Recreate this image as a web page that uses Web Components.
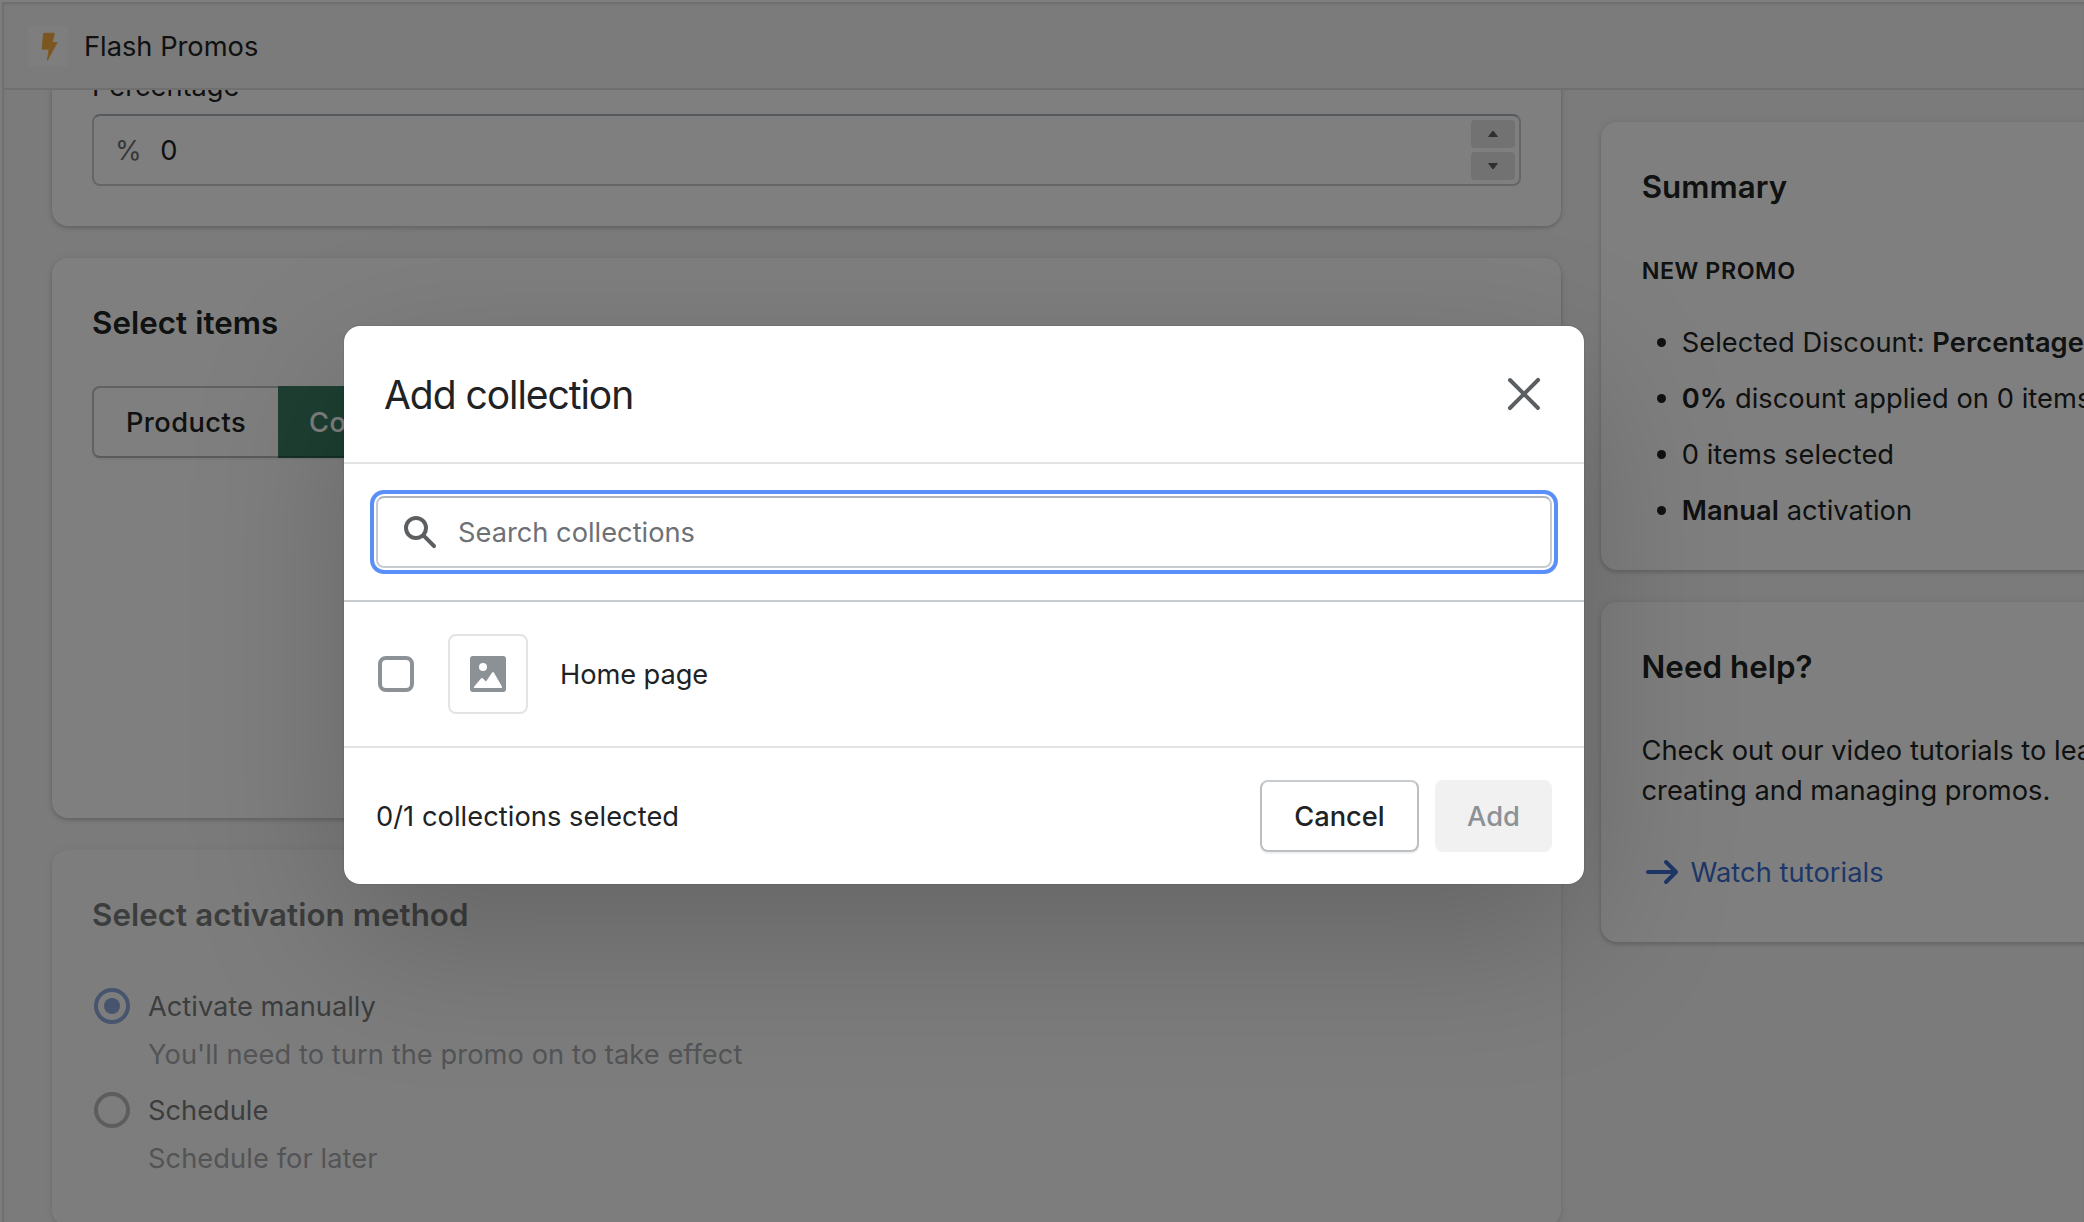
<!DOCTYPE html>
<html lang="en">
<head>
<meta charset="utf-8">
<title>Flash Promos</title>
<style>
html,body{margin:0;height:100%;overflow:hidden}
body{font:400 27.25px/40px Inter,"Liberation Sans",sans-serif;color:#202223;background:#f6f6f7}
.columns{display:flex;align-items:flex-start;gap:40px;padding-left:48px}
.main{display:flex;flex-direction:column;gap:32px;width:1509px;flex:none;margin-top:-40px}
.aside{display:flex;flex-direction:column;gap:32px;width:560px;flex:none;padding-top:32px}
.copy{white-space:nowrap;padding-top:1px;margin-bottom:-1px;letter-spacing:.02px}
b{font-weight:600}
</style>
</head>
<body>
<promo-app>
  <app-bar slot="bar">Flash Promos</app-bar>
  <div class="columns">
    <div class="main">
      <ui-card style="--pt:16px;height:176px"><number-field label="Percentage" prefix="%" value="0"></number-field></ui-card>
      <ui-card style="height:560px" heading="Select items"><segmented-control><span>Products</span><span slot="on">Collections</span></segmented-control></ui-card>
      <ui-card style="height:376px;opacity:.58;--gap:48px" heading="Select activation method">
        <radio-option checked label="Activate manually">You'll need to turn the promo on to take effect</radio-option>
        <radio-option label="Schedule">Schedule for later</radio-option>
      </ui-card>
    </div>
    <div class="aside">
      <ui-card style="height:448px;--gap:44px;--pl:40.7px" heading="Summary">
        <summary-list label="New promo">
          <summary-item>Selected Discount: <b>Percentage</b></summary-item>
          <summary-item><b>0%</b> discount applied on 0 items</summary-item>
          <summary-item>0 items selected</summary-item>
          <summary-item><b>Manual</b> activation</summary-item>
        </summary-list>
      </ui-card>
      <ui-card style="height:340px;--pl:40.5px" heading="Need help?">
        <div class="copy">Check out our video tutorials to learn<br>creating and managing promos.</div>
        <arrow-link>Watch tutorials</arrow-link>
      </ui-card>
    </div>
  </div>
  <modal-dialog slot="overlay" heading="Add collection">
    <search-field>Search collections</search-field>
    <resource-row slot="rows">Home page</resource-row>
    <span slot="status">0/1 collections selected</span>
    <ui-button slot="actions" style="width:159px">Cancel</ui-button>
    <ui-button slot="actions" disabled style="width:117px">Add</ui-button>
  </modal-dialog>
</promo-app>
<script>
const define = (name, render) => customElements.define(name, class extends HTMLElement {
  connectedCallback() {
    if (this.shadowRoot) return;
    const t = document.createElement('template');
    // .t drops a label one pixel inside its line box without growing the row
    t.innerHTML = '<style>*{box-sizing:border-box}:host{box-sizing:border-box}.t{padding-top:1px;margin-bottom:-1px}</style>' + render(n => this.getAttribute(n) || '');
    this.attachShadow({ mode: 'open' }).append(t.content.cloneNode(true));
  }
});

define('promo-app', () => `
<style>
:host{display:grid;grid-template:2px 1220px/4px 1fr;width:100vw;height:100vh;overflow:hidden;position:relative}
.top{grid-column:1/3;background:#fff}
.rail{background:#fafafa;border-right:2px solid #e0e0e1}
.view{display:flex;flex-direction:column;overflow:hidden;box-shadow:inset 0 3px 3px -1px #d9d9da}
.scroll{flex:1;overflow:hidden}
</style>
<div class="top"></div><div class="rail"></div>
<div class="view"><slot name="bar"></slot><div class="scroll"><slot></slot></div></div>
<slot name="overlay"></slot>`);

define('app-bar', () => `
<style>
:host{display:flex;align-items:center;gap:16px;height:88px;flex:none;padding:2px 0 0 24px;border-bottom:2px solid #dedfe0}
.logo{width:40px;height:40px;background:#fdfdfd;border-radius:3px}
svg{display:block}
</style>
<div class="logo"><svg width="40" height="40" viewBox="0 0 40 40"><path d="M15.500 7.200h11l-2.200 9.300h4.900L19.400 34.400l1.600-11.200h-6.900z" fill="#f9ad42" stroke="#f9ad42" stroke-width=".8" stroke-linejoin="round"/></svg></div>
<span class="t"><slot></slot></span>`);

define('ui-card', a => `
<style>
:host{display:block;flex:none;background:#fff;border-radius:16px;padding:var(--pt,40px) 40px 0 var(--pl,40px);box-shadow:0 0 10px rgba(23,24,24,.06),0 2px 4px rgba(0,0,0,.18)}
h2{margin:0 0 calc(var(--gap,40px) - 1px);padding-top:1px;font-size:31.3px;font-weight:600;line-height:48px;letter-spacing:.06px}
</style>
${a('heading') ? `<h2>${a('heading')}</h2>` : ''}<slot></slot>`);

define('number-field', a => `
<style>
:host{display:block}
.box{display:flex;align-items:center;height:72px;margin-top:8px;border:2px solid #c9cccf;border-top-color:#aeb4b9;border-radius:8px;padding:0 4px 0 21px}
.pre{color:#6d7175;margin-right:18.500px}
.val{flex:1}
.spin{display:flex;flex-direction:column;gap:4px;width:44px}
.spin i{display:flex;align-items:center;justify-content:center;height:28px;border-radius:4px;background:#e4e5e7}
svg{display:block;fill:#5c5f62}
</style>
<div class="t">${a('label')}</div>
<div class="box"><span class="pre t">${a('prefix')}</span><span class="val t">${a('value')}</span>
<span class="spin"><i><svg width="12" height="8" viewBox="0 0 12 8"><path d="M6 1 1.600 6.500h8.800z" stroke="#5c5f62" stroke-linejoin="round"/></svg></i><i><svg width="12" height="8" viewBox="0 0 12 8"><path d="M6 7 1.600 1.500h8.800z" stroke="#5c5f62" stroke-linejoin="round"/></svg></i></span></div>`);

define('segmented-control', () => `
<style>
:host{display:flex;height:72px;font-weight:500;letter-spacing:.45px}
.a{width:186px;display:flex;align-items:center;justify-content:center;border:2px solid #c0c2c4;border-bottom-color:#b4b6b8;border-right:0;border-radius:8px 0 0 8px;box-shadow:0 2px 0 rgba(0,0,0,.05)}
.b{display:flex;align-items:center;padding:0 31px;color:#fff;background:#3a7e62;border-radius:0 8px 8px 0;box-shadow:inset 0 -2px 0 rgba(0,0,0,.22),0 2px 0 rgba(0,0,0,.05)}
</style>
<div class="a"><span class="t"><slot></slot></span></div><div class="b"><span class="t"><slot name="on"></slot></span></div>`);

define('radio-option', a => `
<style>
:host{display:grid;grid-template-columns:36px 1fr;grid-auto-rows:40px;column-gap:18px;row-gap:8px;padding-left:2px;margin-bottom:16px;align-items:center}
i{width:36px;height:36px;border-radius:50%;border:4px solid #8c9196;display:grid;place-items:center}
:host([checked]) i{border-color:#4070cc}
:host([checked]) i::after{content:"";width:16px;height:16px;border-radius:50%;background:#4070cc}
p{grid-column:2;margin:0;color:#6d7175;letter-spacing:.07px}
p.t{margin-bottom:-1px}
</style>
<i></i><span class="t">${a('label')}</span><p class="t"><slot></slot></p>`);

define('summary-list', a => `
<style>
:host{display:block}
h3{margin:0 0 35px;padding-top:1px;font-size:23.3px;line-height:32px;font-weight:600;letter-spacing:.55px;text-transform:uppercase}
div{display:flex;flex-direction:column;gap:16px}
</style><h3>${a('label')}</h3><div><slot></slot></div>`);

define('summary-item', () => `
<style>
:host{display:flex;align-items:center;white-space:nowrap;letter-spacing:.06px}
i{width:9px;height:9px;border-radius:50%;background:currentColor;margin:0 16px 0 15px}
</style><i></i><span class="t"><slot></slot></span>`);

define('arrow-link', () => `
<style>
:host{display:flex;align-items:center;gap:9px;margin-top:42px;color:#3b6fd0}
svg{display:block;fill:currentColor}
span{letter-spacing:.05px}
</style>
<svg width="40" height="40" viewBox="0 0 20 20"><path d="M17.707 9.293l-5-5a.999.999 0 1 0-1.414 1.414L14.586 9H3a1 1 0 1 0 0 2h11.586l-3.293 3.293a.999.999 0 1 0 1.414 1.414l5-5a.999.999 0 0 0 0-1.414z"/></svg><span class="t"><slot></slot></span>`);

define('modal-dialog', a => `
<style>
:host{position:absolute;inset:0;background:rgba(0,0,0,.5);display:flex;align-items:flex-start;padding:326px 0 0 344px}
.dlg{width:1240px;background:#fff;border-radius:16px;box-shadow:0 52px 160px rgba(0,0,0,.2),0 0 2px rgba(0,0,0,.2)}
header{display:flex;align-items:center;justify-content:space-between;height:138px;padding:0 40px;border-bottom:2px solid #e1e3e5}
h1{margin:0;padding-top:2px;font-size:39px;font-weight:400;line-height:56px;letter-spacing:-1.050px}
svg{display:block;fill:#5c5f62}
.search{height:138px;padding:26px;border-bottom:2px solid #c9cccf}
.rows{border-bottom:2px solid #e1e3e5}
footer{display:flex;align-items:center;gap:16px;height:136px;padding:0 32px}
.status{flex:1;letter-spacing:.05px}
</style>
<div class="dlg">
<header><h1>${a('heading')}</h1><svg width="40" height="40" viewBox="0 0 20 20"><path d="M11.414 10l6.293-6.293a1 1 0 1 0-1.414-1.414L10 8.586 3.707 2.293a1 1 0 0 0-1.414 1.414L8.586 10l-6.293 6.293a1 1 0 1 0 1.414 1.414L10 11.414l6.293 6.293A.998.998 0 0 0 18 17a.999.999 0 0 0-.293-.707L11.414 10z"/></svg></header>
<div class="search"><slot></slot></div>
<div class="rows"><slot name="rows"></slot></div>
<footer><div class="status t"><slot name="status"></slot></div><slot name="actions"></slot></footer>
</div>`);

define('search-field', () => `
<style>
:host{display:block;border:4px solid #5a8ff8;border-radius:14px;padding:2px;height:84px}
div{display:flex;align-items:center;gap:18px;height:72px;border:2px solid #c9cccf;border-top-color:#aeb4b9;border-radius:8px;padding-left:22px;color:#6d7175}
svg{display:block;fill:#5c5f62}
</style>
<div><svg width="40" height="40" viewBox="0 0 20 20"><path d="M8 12a4 4 0 1 1 0-8 4 4 0 0 1 0 8zm9.707 4.293l-4.820-4.820A5.968 5.968 0 0 0 14 8 6 6 0 0 0 2 8a6 6 0 0 0 6 6 5.968 5.968 0 0 0 3.473-1.113l4.820 4.820a.997.997 0 0 0 1.414 0 .999.999 0 0 0 0-1.414z"/></svg><span class="t"><slot></slot></span></div>`);

define('resource-row', () => `
<style>
:host{display:flex;align-items:center;height:144px;padding-left:34px}
.check{width:36px;height:36px;border:4px solid #8c9196;border-radius:8px}
.thumb{display:grid;place-items:center;width:80px;height:80px;margin:0 32px 0 34px;border:2px solid #e1e3e5;border-radius:8px}
svg{display:block}
.t{letter-spacing:-.08px}
</style>
<i class="check"></i>
<div class="thumb"><svg width="36" height="36" viewBox="0 0 36 36"><rect width="36" height="36" rx="3" fill="#8c9196"/><circle cx="13" cy="11" r="4" fill="#fff"/><path d="M4.600 32C3.800 32 3.600 31.400 4 30.800L11 22.600Q12 21.500 13 22.500L16 25.400 22 16.700Q23 15.400 24 16.800L31.900 30.600C32.200 31.300 32 32 31.200 32Z" fill="#fff"/></svg></div>
<span class="t"><slot></slot></span>`);

define('ui-button', () => `
<style>
:host{display:flex;align-items:center;justify-content:center;height:72px;border:2px solid #babfc3;border-top-color:#c9cccf;border-radius:8px;font-weight:500;box-shadow:0 2px 0 rgba(0,0,0,.05)}
:host([disabled]){background:#f1f1f1;border-color:#f1f1f1;color:#8c9196;box-shadow:none}
</style><span class="t"><slot></slot></span>`);
</script>
</body>
</html>
